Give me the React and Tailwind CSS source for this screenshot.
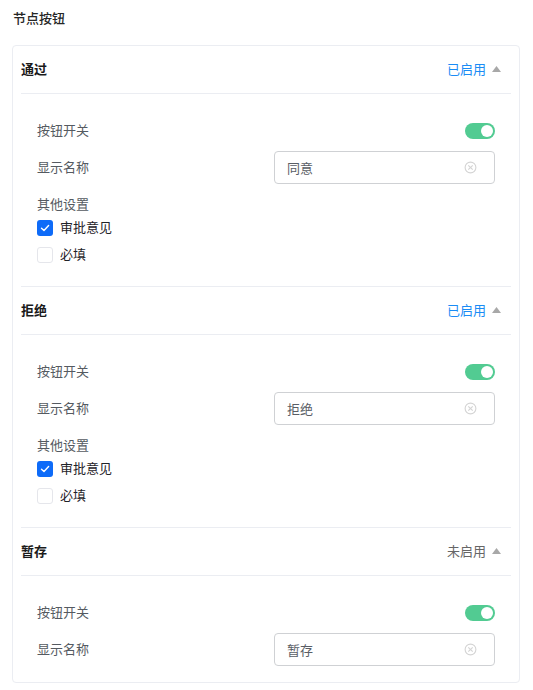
import React, { useState } from 'react';

const font = { fontFamily: '"Noto Sans CJK SC", "Noto Sans", sans-serif' };

function Switch({ on, onChange }) {
  return (
    <button
      onClick={onChange}
      className={`relative w-[30px] h-[16px] rounded-full ${on ? 'bg-[#52cb92]' : 'bg-[#dcdfe6]'}`}
    >
      <span
        className={`absolute top-[2px] w-[12px] h-[12px] rounded-full bg-white ${on ? 'left-[16px]' : 'left-[2px]'}`}
      />
    </button>
  );
}

function Checkbox({ checked, label, onChange }) {
  return (
    <label className="flex items-center h-[27px] cursor-pointer" onClick={onChange}>
      <span
        className={`w-[16px] h-[16px] rounded-[3px] flex items-center justify-center ${
          checked ? 'bg-[#0e6bf8]' : 'bg-white border border-[#e5e6eb]'
        }`}
      >
        {checked && (
          <svg width="10" height="10" viewBox="0 0 10 10">
            <path d="M1.5 5.2 L4 7.5 L8.6 2.6" fill="none" stroke="white" strokeWidth="1.4" strokeLinecap="round" strokeLinejoin="round" />
          </svg>
        )}
      </span>
      <span className="ml-[7px] text-[13px] text-[#1f2329] pb-[1px]">{label}</span>
    </label>
  );
}

function ClearIcon() {
  return (
    <svg width="13" height="13" viewBox="0 0 14 14">
      <circle cx="7" cy="7" r="5.8" fill="none" stroke="#d4d4d4" strokeWidth="1.2" />
      <path d="M4.6 4.6 L9.4 9.4 M9.4 4.6 L4.6 9.4" stroke="#d4d4d4" strokeWidth="1.2" />
    </svg>
  );
}

function Section({ title, enabled, first, showOther, defaultName }) {
  const [on, setOn] = useState(true);
  const [name, setName] = useState(defaultName);
  const [opinion, setOpinion] = useState(true);
  const [required, setRequired] = useState(false);

  return (
    <div>
      <div className={`flex items-center justify-between pb-[2px] ${first ? 'h-[47px]' : 'h-[48px] border-t border-[#ebedf2]'}`}>
        <span className="text-[13px] font-bold text-[#1a1a1a]">{title}</span>
        <div className="flex items-center pr-[10px]">
          <span className={`text-[13px] ${enabled ? 'text-[#1a8cf5]' : 'text-[#666666]'}`}>
            {enabled ? '已启用' : '未启用'}
          </span>
          <svg className="ml-[6px]" width="9" height="6" viewBox="0 0 9 6">
            <path d="M4.5 0 L9 6 L0 6 Z" fill="#a8a8a8" />
          </svg>
        </div>
      </div>
      <div className={`border-t border-[#ebedf2] px-4 pt-[20px] ${showOther ? 'pb-[18px]' : 'pb-[16px]'}`}>
        <div className="flex items-center justify-between h-[33px]">
          <span className="text-[13px] text-[#555a61] pb-[2px]">按钮开关</span>
          <Switch on={on} onChange={() => setOn(!on)} />
        </div>
        <div className="flex items-center justify-between h-[33px] mt-[4px]">
          <span className="text-[13px] text-[#555a61] pb-[2px]">显示名称</span>
          <div className="w-[221px] h-[33px] border border-[#cfd1d4] rounded-[4px] flex items-center pl-[12px] pr-[17px]">
            <input
              value={name}
              onChange={(e) => setName(e.target.value)}
              className="flex-1 min-w-0 outline-none text-[13px] text-[#5a5e66] bg-transparent"
              style={font}
            />
            <ClearIcon />
          </div>
        </div>
        {showOther && (
          <>
            <div className="mt-[10px] h-[20px] flex items-center text-[13px] text-[#555a61] pb-[1px]">其他设置</div>
            <Checkbox checked={opinion} label="审批意见" onChange={() => setOpinion(!opinion)} />
            <Checkbox checked={required} label="必填" onChange={() => setRequired(!required)} />
          </>
        )}
      </div>
    </div>
  );
}

export default function App() {
  return (
    <div className="min-h-screen bg-white px-3 pt-[9px] pb-2" style={font}>
      <div className="h-[18px] flex items-center pl-[1px] text-[13px] font-medium text-[#262626]">节点按钮</div>
      <div className="mt-[18px] w-[508px] border border-[#ebedf2] rounded-[4px] px-2">
        <Section title="通过" enabled first showOther defaultName="同意" />
        <Section title="拒绝" enabled showOther defaultName="拒绝" />
        <Section title="暂存" enabled={false} defaultName="暂存" />
      </div>
    </div>
  );
}
